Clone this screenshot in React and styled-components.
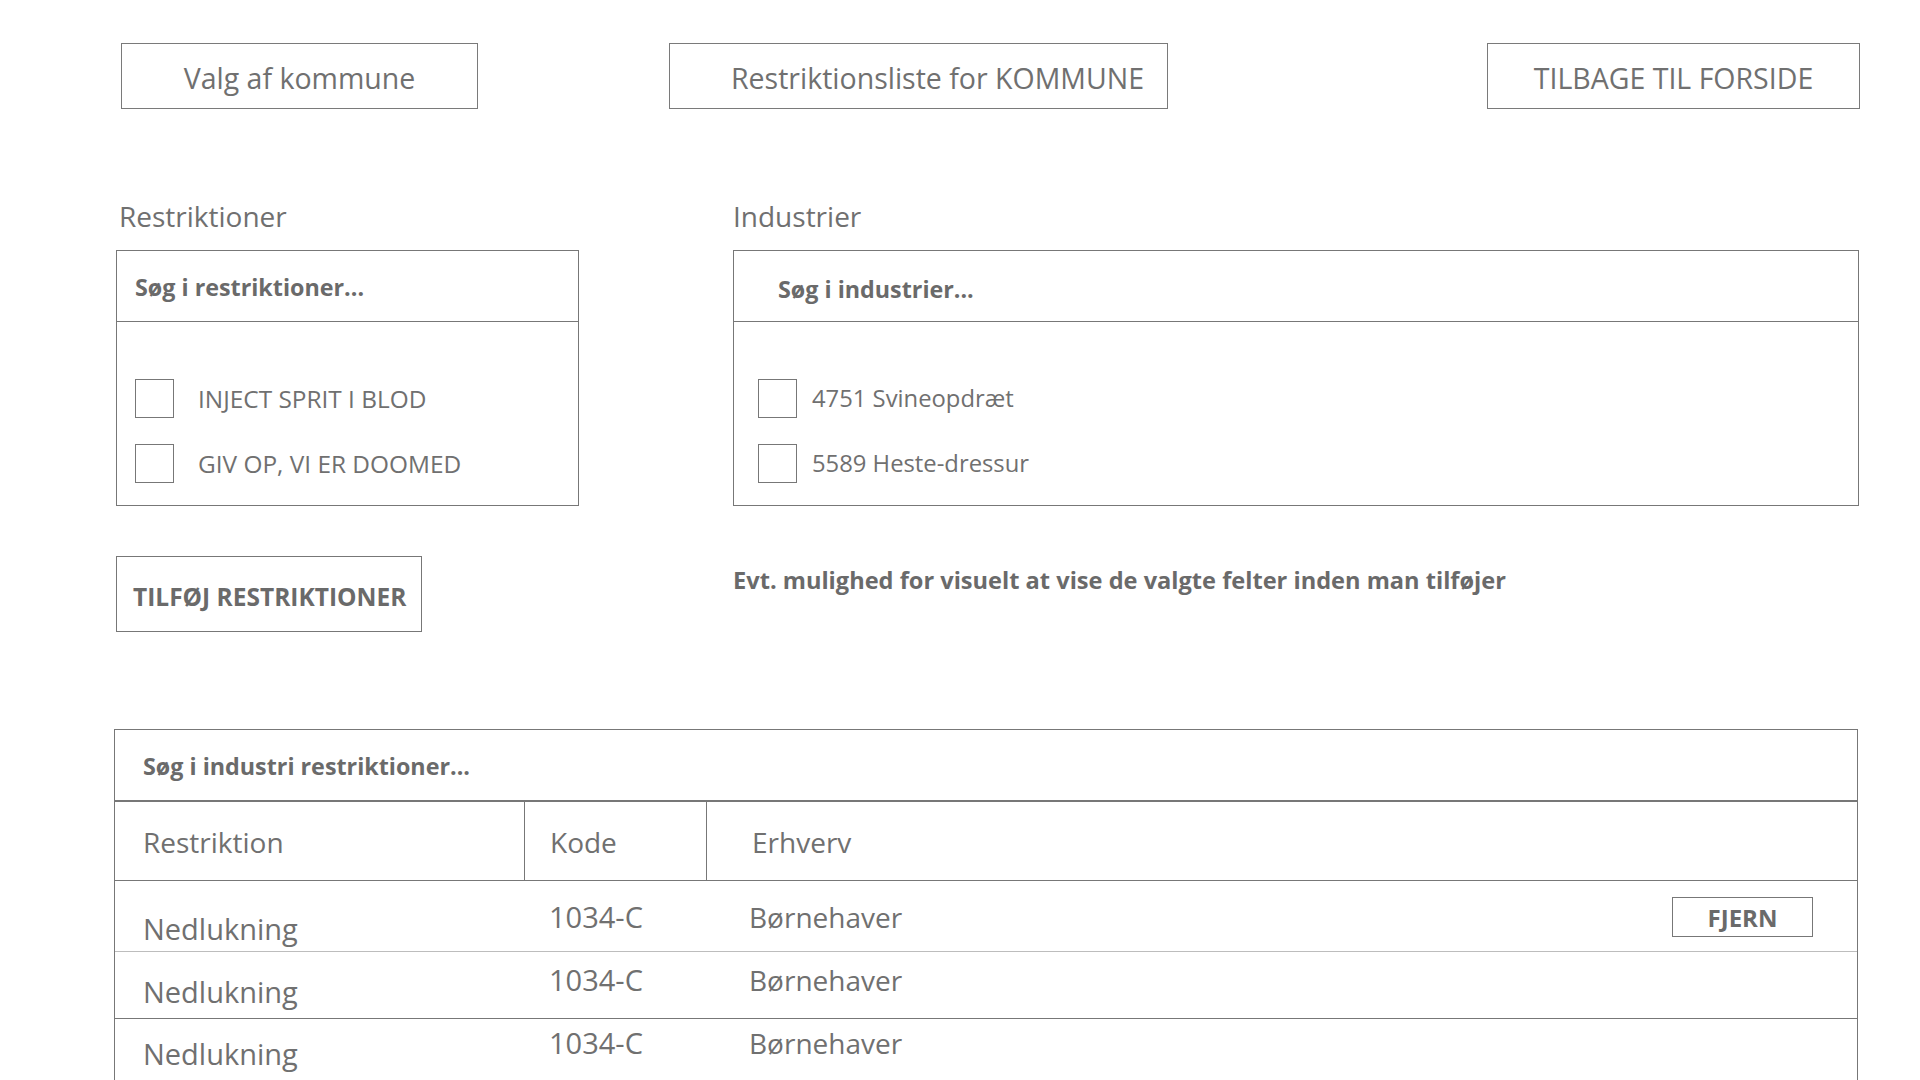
import React from 'react'
import styled, { createGlobalStyle } from 'styled-components'

const GlobalStyle = createGlobalStyle`
  body {
    margin: 0;
    background: #ffffff;
    font-family: "Open Sans", "Noto Sans", sans-serif;
    color: #6f6f6f;
  }
`

const Page = styled.div`
  width: 1920px;
  height: 1080px;
  overflow: hidden;
  box-sizing: border-box;
  padding-top: 43px;
`

const TopBar = styled.div`
  display: flex;
  align-items: center;
  padding: 0 60px 0 121px;
`

const NavButton = styled.div`
  box-sizing: border-box;
  height: 66px;
  width: ${p => p.$w}px;
  margin-right: ${p => p.$mr || 0}px;
  margin-left: ${p => (p.$push ? 'auto' : '0')};
  border: 1px solid #7a7a7a;
  display: flex;
  align-items: center;
  justify-content: center;
  font-size: 28.5px;
  color: #707070;
  padding-left: ${p => p.$pl || 0}px;
  padding-top: 4px;
  white-space: nowrap;
`

const Columns = styled.div`
  display: grid;
  grid-template-columns: 463px 1126px;
  column-gap: 154px;
  padding-left: 116px;
`

const FilterSection = styled(Columns)`
  margin-top: 90px;
`

const Label = styled.div`
  font-size: 28px;
  line-height: 34px;
  padding-left: ${p => p.$pl || 0}px;
  margin-bottom: 17px;
  color: #707070;
`

const Box = styled.div`
  box-sizing: border-box;
  border: 1px solid #777777;
  height: 256px;
  display: flex;
  flex-direction: column;
`

const SearchRow = styled.div`
  box-sizing: border-box;
  height: ${p => p.$h || 71}px;
  border-bottom: ${p => p.$thick ? 2 : 1}px solid #777777;
  display: flex;
  align-items: center;
  padding-left: ${p => p.$pl}px;
  padding-top: ${p => p.$pt || 0}px;
  font-size: 23.3px;
  font-weight: 700;
  color: #6a6a6a;
  white-space: nowrap;
`

const CheckList = styled.div`
  display: flex;
  flex-direction: column;
  gap: 25px;
  padding: 56px 0 0 ${p => p.$pl}px;
`

const CheckRow = styled.label`
  display: flex;
  align-items: center;
  gap: ${p => p.$gap}px;
  height: 40px;
  font-size: ${p => p.$fs}px;
  color: #707070;
  white-space: nowrap;
`

const CheckBox = styled.span`
  box-sizing: border-box;
  width: 39px;
  height: 39px;
  border: 1px solid #777777;
  flex-shrink: 0;
`

const ActionSection = styled(Columns)`
  margin-top: 50px;
  align-items: start;
`

const AddButton = styled.div`
  box-sizing: border-box;
  width: 306px;
  height: 76px;
  border: 1px solid #777777;
  display: flex;
  align-items: center;
  padding: 4px 0 0 16px;
  font-size: 24.5px;
  font-weight: 700;
  color: #6a6a6a;
  white-space: nowrap;
`

const Note = styled.div`
  font-size: 23.6px;
  font-weight: 700;
  color: #6a6a6a;
  margin-top: 8px;
  white-space: nowrap;
`

const Table = styled.div`
  margin: 97px 0 0 114px;
  width: 1744px;
  box-sizing: border-box;
  border: 1px solid #777777;
  border-bottom: none;
`

const HeadRow = styled.div`
  display: grid;
  grid-template-columns: 409px 182px 1fr;
  height: 79px;
  box-sizing: border-box;
  border-bottom: 1px solid #777777;
`

const HeadCell = styled.div`
  display: flex;
  align-items: center;
  padding-left: ${p => p.$pl}px;
  border-left: ${p => (p.$divider ? '1px solid #777777' : 'none')};
  font-size: 28px;
  color: #707070;
  padding-top: 2px;
`

const BodyRow = styled.div`
  display: grid;
  grid-template-columns: 409px 182px 1fr;
  height: ${p => p.$h}px;
  box-sizing: border-box;
  border-bottom: 1px solid ${p => p.$light ? '#bdbdbd' : '#777777'};
`

const Cell = styled.div`
  padding-left: ${p => p.$pl}px;
  padding-top: ${p => p.$pt}px;
  font-size: ${p => p.$fs || 28}px;
  line-height: 34px;
  color: #707070;
`

const LastCell = styled(Cell)`
  display: flex;
  justify-content: space-between;
  align-items: flex-start;
  padding-right: 44px;
`

const RemoveButton = styled.div`
  box-sizing: border-box;
  width: 141px;
  height: 40px;
  margin-top: ${p => p.$mt}px;
  border: 1px solid #777777;
  display: flex;
  align-items: center;
  justify-content: center;
  font-size: 24px;
  font-weight: 700;
  color: #6a6a6a;
  padding-top: 2px;
`

const restrictions = ['INJECT SPRIT I BLOD', 'GIV OP, VI ER DOOMED']
const industries = ['4751 Svineopdræt', '5589 Heste-dressur']

const rows = [
  { h: 71, code: 19, name: 31, light: true, remove: true },
  { h: 67, code: 11, name: 23 },
  { h: 62, code: 7, name: 18 },
]

export default function App() {
  return (
    <>
      <GlobalStyle />
      <Page>
        <TopBar>
          <NavButton $w={357} $mr={191}>Valg af kommune</NavButton>
          <NavButton $w={499} $pl={38}>Restriktionsliste for KOMMUNE</NavButton>
          <NavButton $w={373} $push>TILBAGE TIL FORSIDE</NavButton>
        </TopBar>

        <FilterSection>
          <div>
            <Label $pl={3}>Restriktioner</Label>
            <Box>
              <SearchRow $pl={18} $pt={2}>Søg i restriktioner...</SearchRow>
              <CheckList $pl={18}>
                {restrictions.map(r => (
                  <CheckRow key={r} $gap={24} $fs={24.4}>
                    <CheckBox />
                    {r}
                  </CheckRow>
                ))}
              </CheckList>
            </Box>
          </div>
          <div>
            <Label>Industrier</Label>
            <Box>
              <SearchRow $pl={44} $pt={6}>Søg i industrier...</SearchRow>
              <CheckList $pl={24}>
                {industries.map(i => (
                  <CheckRow key={i} $gap={15} $fs={23.8}>
                    <CheckBox />
                    {i}
                  </CheckRow>
                ))}
              </CheckList>
            </Box>
          </div>
        </FilterSection>

        <ActionSection>
          <AddButton>TILFØJ RESTRIKTIONER</AddButton>
          <Note>Evt. mulighed for visuelt at vise de valgte felter inden man tilføjer</Note>
        </ActionSection>

        <Table>
          <SearchRow $pl={28} $h={72} $pt={2} $thick>Søg i industri restriktioner...</SearchRow>
          <HeadRow>
            <HeadCell $pl={28}>Restriktion</HeadCell>
            <HeadCell $pl={25} $divider>Kode</HeadCell>
            <HeadCell $pl={45} $divider>Erhverv</HeadCell>
          </HeadRow>
          {rows.map((r, idx) => (
            <BodyRow key={idx} $h={r.h} $light={r.light}>
              <Cell $pl={28} $pt={r.name} $fs={29}>Nedlukning</Cell>
              <Cell $pl={25} $pt={r.code} $fs={29}>1034-C</Cell>
              <LastCell $pl={43} $pt={r.code}>
                <span>Børnehaver</span>
                {r.remove && <RemoveButton $mt={-3}>FJERN</RemoveButton>}
              </LastCell>
            </BodyRow>
          ))}
        </Table>
      </Page>
    </>
  )
}
